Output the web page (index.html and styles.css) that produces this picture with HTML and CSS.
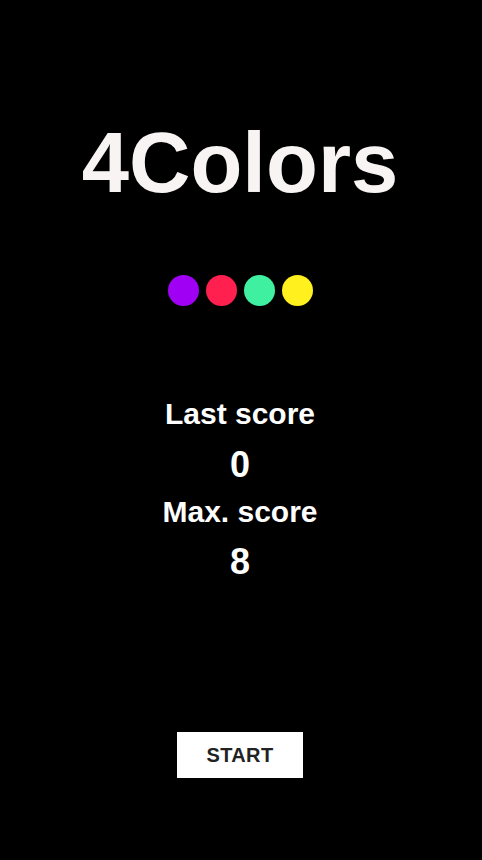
FILE: index.html
```html
<!DOCTYPE html>
<html lang="en">
<head>
    <meta charset="UTF-8">
    <meta name="viewport" content="width=device-width, initial-scale=1.0">
    <title>4Colors</title>
    <link rel="stylesheet" href="styles.css">
</head>
<body>
    <div class="screen">
        <h1 class="title">4Colors</h1>

        <!-- the four game colours -->
        <div class="dots">
            <span class="dot purple"></span>
            <span class="dot red"></span>
            <span class="dot green"></span>
            <span class="dot yellow"></span>
        </div>

        <p class="label label-last">Last score</p>
        <p class="score">0</p>
        <p class="label label-max">Max. score</p>
        <p class="score score-max">8</p>

        <button class="start-btn">START</button>
    </div>
</body>
</html>
```

FILE: styles.css
```css
body {
    margin: 0;
    background-color: #000;
    color: #fff;
    font-family: 'Liberation Sans', Arial, sans-serif;
}
.screen {
    display: flex;
    flex-direction: column;
    align-items: center;
    height: 860px;
    padding-right: 2px;
}
.title {
    margin: 120px 0 0;
    font-size: 85px;
    line-height: 1;
    font-weight: bold;
    color: #f9f4f4;
}
.dots {
    display: flex;
    gap: 7px;
    margin-top: 70px;
}
.dot {
    width: 31px;
    height: 31px;
    border-radius: 50%;
}
.purple { background-color: #a000f4; }
.red { background-color: #ff2050; }
.green { background-color: #3ff0a0; }
.yellow { background-color: #fff01e; }

.label, .score {
    margin: 0;
    line-height: 1;
    font-weight: bold;
}
.label {
    font-size: 30px;
}
.label-last {
    margin-top: 93px;
}
.label-max {
    margin-top: 14px;
}
.score {
    font-size: 36px;
    margin-top: 18px;
}
.score-max {
    margin-top: 17px;
}
.start-btn {
    margin-top: 152px;
    width: 126px;
    height: 46px;
    border: none;
    border-radius: 0;
    background-color: #fff;
    color: #222;
    font-family: 'Liberation Sans', Arial, sans-serif;
    font-size: 20px;
    font-weight: bold;
    letter-spacing: 0.4px;
    cursor: pointer;
}
```
